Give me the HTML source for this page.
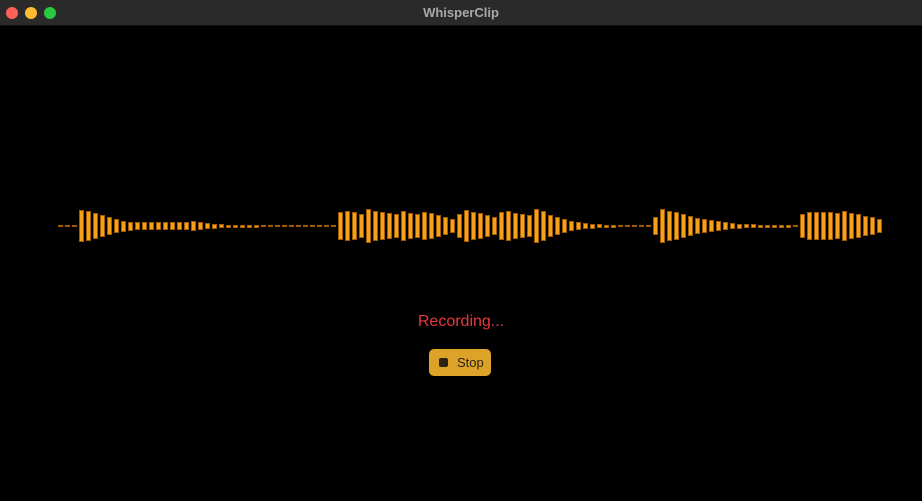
<!DOCTYPE html>
<html><head><meta charset="utf-8"><style>
html,body{margin:0;padding:0;background:#000;width:922px;height:501px;overflow:hidden;font-family:"Liberation Sans",sans-serif}
.tb{position:absolute;left:0;top:0;width:922px;height:25px;background:#2a2a2a;border-bottom:1px solid #111}
.tb .t{position:absolute;left:0;right:0;top:5px;text-align:center;color:#a8a8a8;font-weight:bold;font-size:13px}
.d{position:absolute;top:7px;width:12px;height:12px;border-radius:50%}
#w{position:absolute;left:0;top:0}
.b{position:absolute;width:5px;background:#f7a11a;border:0.5px solid #a05a00;box-sizing:border-box}
.rec{position:absolute;left:0;right:0;top:313px;text-align:center;color:#e8383b;font-size:16px}
.btn{position:absolute;left:429px;top:349px;width:62px;height:27px;background:#dca328;border-radius:5px;box-shadow:0 1px 2px rgba(0,0,0,.5)}
.btn .sq{position:absolute;left:10px;top:9px;width:9px;height:9px;background:#2c2410;border-radius:2px}
.btn .s{position:absolute;left:28px;top:6px;font-size:13px;color:#2c2410}
</style></head><body>
<div class="tb"><div class="d" style="left:6px;background:#fe5f57"></div><div class="d" style="left:25px;background:#febc2e"></div><div class="d" style="left:44px;background:#28c840"></div><div class="t">WhisperClip</div></div>
<div id="w"></div>
<div class="rec">Recording...</div>
<div class="btn"><div class="sq"></div><div class="s">Stop</div></div>
<script>
var h=[2,2,2,32,30,26,22,18,14,11,9,8,8,8,8,8,8,8,8,10,8,6,5,4,3,3,3,3,3,2,2,2,2,2,2,2,2,2,2,2,
28,30,28,24,34,30,28,26,24,30,26,24,28,26,22,18,14,24,32,28,26,22,18,28,30,26,24,22,34,30,22,18,14,10,8,6,5,4,3,3,2,2,2,2,2,
18,34,30,28,24,20,16,14,12,10,8,6,5,4,4,3,3,3,3,3,2,
24,28,28,28,28,26,30,26,24,20,18,14];
var w=document.getElementById('w'),s='';
for(var i=0;i<h.length;i++){var x=58+i*7,hh=Math.max(h[i],2);s+='<div class="b" style="left:'+x+'px;top:'+(226-hh/2)+'px;height:'+hh+'px"></div>';}
w.innerHTML=s;
</script>
</body></html>
